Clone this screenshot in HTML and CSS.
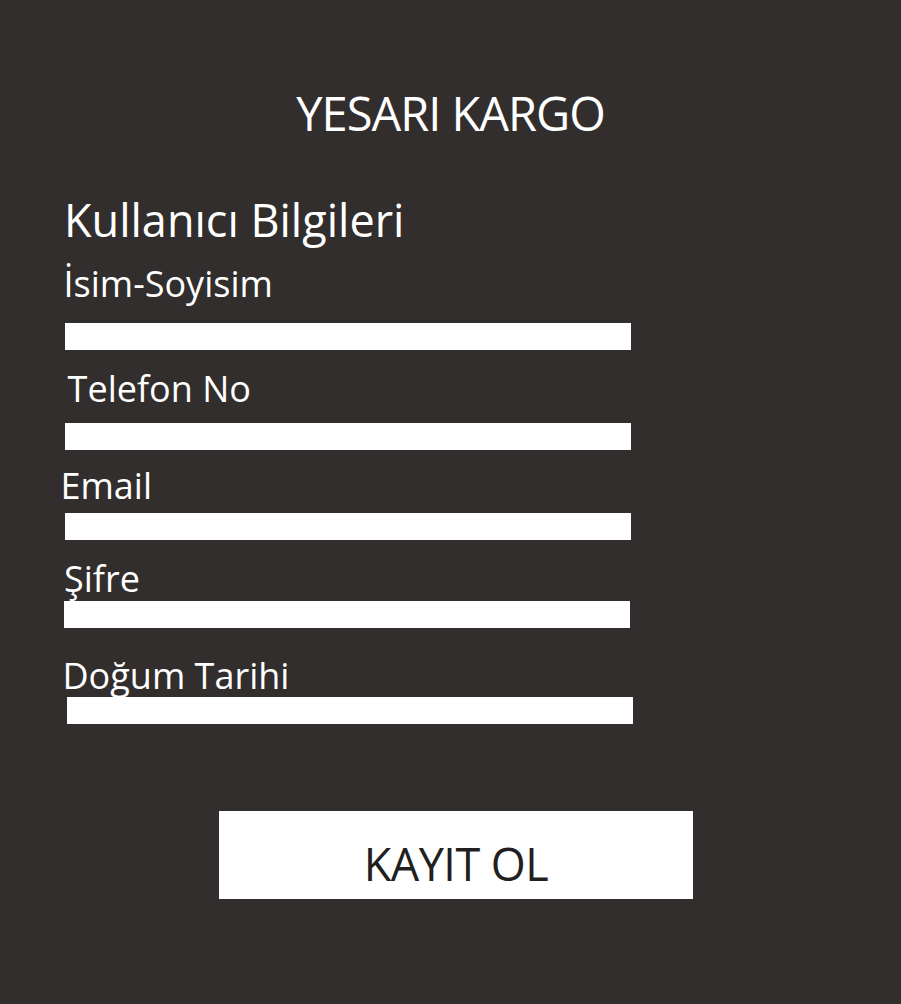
FILE: index.html
```html
<!DOCTYPE html>
<html lang="tr">
<head>
<meta charset="utf-8">
<title>Yesari Kargo - Kayıt</title>
<link rel="stylesheet" href="styles.css">
</head>
<body>
<main class="page">
  <h1 class="brand">YESARI KARGO</h1>
  <form class="form">
    <h2 class="section-title">Kullanıcı Bilgileri</h2>
    <div class="field field-name">
      <label class="label" for="name">İsim-Soyisim</label>
      <input class="input" id="name" type="text">
    </div>
    <div class="field field-phone">
      <label class="label" for="phone">Telefon No</label>
      <input class="input" id="phone" type="tel">
    </div>
    <div class="field field-email">
      <label class="label" for="email">Email</label>
      <input class="input" id="email" type="email">
    </div>
    <div class="field field-password">
      <label class="label" for="password">Şifre</label>
      <input class="input" id="password" type="password">
    </div>
    <div class="field field-birth">
      <label class="label" for="birth">Doğum Tarihi</label>
      <input class="input" id="birth" type="text">
    </div>
    <div class="actions">
      <button class="submit" type="button">KAYIT OL</button>
    </div>
  </form>
</main>
</body>
</html>
```
FILE: styles.css
```css
html, body {
  margin: 0;
  padding: 0;
  background: #322e2d;
}

body {
  font-family: "Open Sans", "Noto Sans", sans-serif;
  color: #ffffff;
}

.page {
  width: 901px;
  height: 1004px;
  box-sizing: border-box;
  padding-top: 90px;
}

.brand {
  margin: 0;
  font-size: 47px;
  line-height: 47px;
  font-weight: 400;
  letter-spacing: -1px;
  text-align: center;
}

.form {
  margin: 60px 0 0 0;
  padding-left: 65px;
  display: flex;
  flex-direction: column;
}

.section-title {
  margin: 0 0 0 -1px;
  font-size: 45px;
  line-height: 45px;
  font-weight: 400;
  letter-spacing: 0;
}

.field {
  display: flex;
  flex-direction: column;
  align-items: flex-start;
}

.label {
  display: block;
  font-size: 36px;
  line-height: 36px;
  font-weight: 400;
  margin-left: -1.5px;
}

.input {
  display: block;
  width: 566px;
  height: 27px;
  margin: 0;
  padding: 0;
  border: none;
  background: #ffffff;
  outline: none;
}

.field-name { margin-top: 24px; }
.field-name .input { margin-top: 21px; }

.field-phone { margin-top: 21px; }
.field-phone .label { margin-left: 2.6px; }
.field-phone .input { margin-top: 16px; }

.field-email { margin-top: 18px; }
.field-email .label { margin-left: -4.5px; }
.field-email .input { margin-top: 9px; }

.field-password { margin-top: 21px; }
.field-password .label { margin-left: -1px; }
.field-password .input { margin-top: 4px; margin-left: -1px; }

.field-birth { margin-top: 30px; }
.field-birth .label { margin-left: -2.5px; }
.field-birth .input { margin-top: 3px; margin-left: 2px; }

.actions {
  margin-top: 87px;
  padding-left: 154px;
}

.submit {
  display: block;
  width: 474px;
  height: 88px;
  box-sizing: border-box;
  margin: 0;
  padding: 17px 0 0 0;
  border: none;
  background: #ffffff;
  color: #231f20;
  font-family: "Open Sans", "Noto Sans", sans-serif;
  font-size: 45px;
  line-height: 45px;
  font-weight: 400;
  letter-spacing: -0.5px;
  text-align: center;
  vertical-align: top;
}
```
